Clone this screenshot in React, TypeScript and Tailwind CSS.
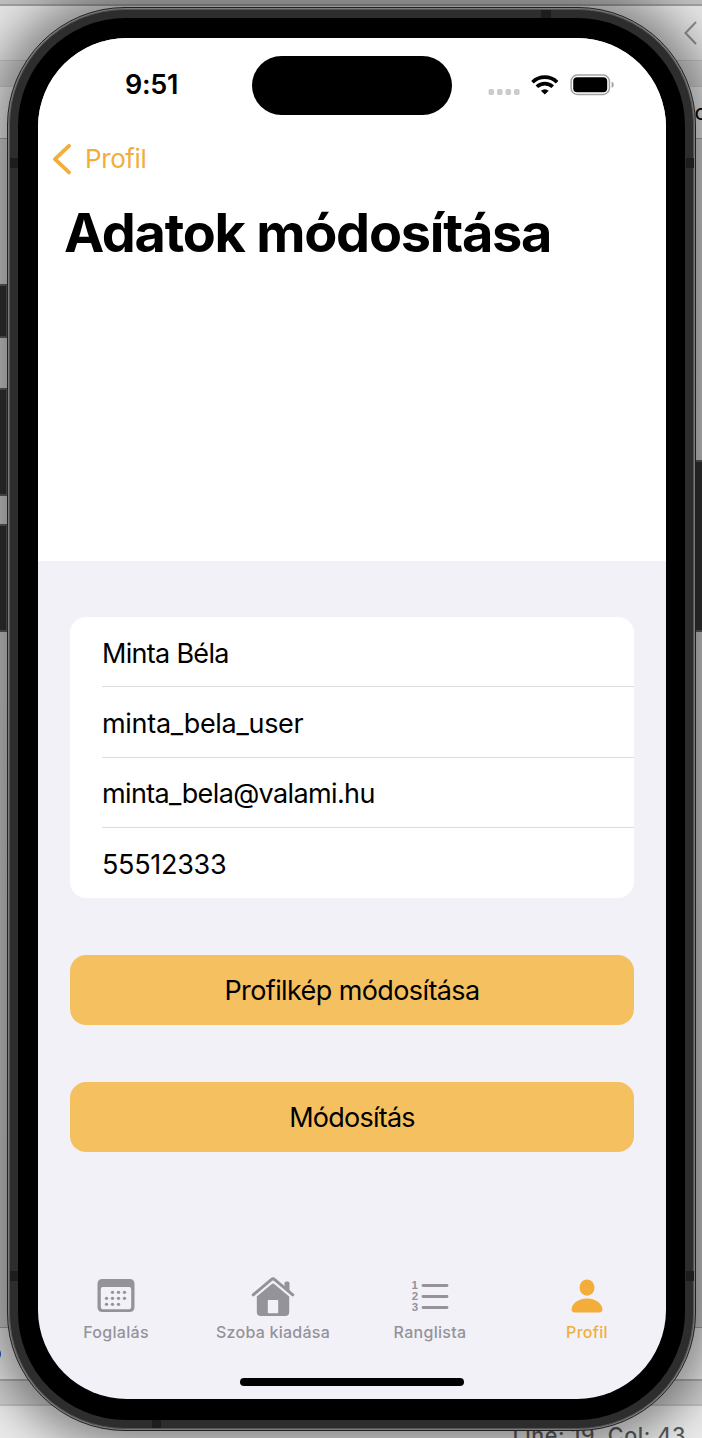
import React from "react";

const rows = [
  { text: "Minta Béla", cls: "tracking-[-0.7px]" },
  { text: "minta_bela_user", cls: "tracking-[-0.3px]" },
  { text: "minta_bela@valami.hu", cls: "tracking-[-0.63px]" },
  { text: "55512333", cls: "tracking-[-0.3px]" },
];

function Backdrop() {
  return (
    <div className="absolute inset-0 flex flex-col overflow-hidden bg-[#b0b0b0]">
      <div className="h-[4px] shrink-0 bg-[#c0c0c0]" />
      <div className="flex h-[57px] shrink-0 items-center justify-end border-t-2 border-b border-t-[#a0a0a0] border-b-[#c8c8c8] bg-[#e6e6e6] pr-[5px]">
        <svg width="13" height="24" viewBox="0 0 13 24" fill="none" stroke="#8d8d8d" strokeWidth="2">
          <path d="M12 1 1.500 12 12 23" />
        </svg>
      </div>
      <div className="h-[25px] shrink-0 bg-[#dadada]" />
      <div className="flex h-[53px] shrink-0 items-center justify-end border-t border-b border-t-[#d0d0d0] border-b-[#ababab] bg-[#f2f2f2]">
        <span className="-mr-[5px] text-[22px] text-black">c</span>
      </div>
      <div className="grow bg-gradient-to-b from-[#dadada] via-[#d4d4d4] to-[#d0d0d0]" />
      <div className="flex h-[54px] shrink-0 items-center border-t border-b-2 border-t-[#a5a5a5] border-b-[#adadad] bg-[#ececec]">
        <div className="-ml-[13px] size-[14px] rounded-full bg-[#1b55cc]" />
      </div>
      <div className="h-[23px] shrink-0 bg-[#d2d2d2]" />
      <div className="flex h-[34px] shrink-0 justify-end border-t-2 border-[#c4c4c4] bg-[#ececec] pt-[16px] pr-[16px] text-[21.5px] leading-[26px] font-medium tracking-[0.6px] whitespace-pre text-[#5b5b5b]">
        Line: 19  Col: 43
      </div>
    </div>
  );
}

function Hardware() {
  return (
    <>
      <div className="absolute top-[284px] left-[-8px] h-[54px] w-[16px] border-2 border-[#606060] bg-[#343434]" />
      <div className="absolute top-[388px] left-[-8px] h-[108px] w-[16px] border-2 border-[#606060] bg-[#343434]" />
      <div className="absolute top-[524px] left-[-8px] h-[108px] w-[16px] border-2 border-[#606060] bg-[#343434]" />
      <div className="absolute top-[460px] right-[-8px] h-[172px] w-[16px] border-2 border-[#606060] bg-[#343434]" />
    </>
  );
}

function AntennaBands() {
  return (
    <>
      <div className="absolute top-[158px] left-[10px] h-[10px] w-[8px] bg-[#1d1d1d]" />
      <div className="absolute top-[158px] right-[8px] h-[10px] w-[8px] bg-[#1d1d1d]" />
      <div className="absolute top-[1271px] left-[10px] h-[10px] w-[8px] bg-[#1d1d1d]" />
      <div className="absolute top-[1271px] right-[8px] h-[10px] w-[8px] bg-[#1d1d1d]" />
      <div className="absolute top-[10px] left-[541px] h-[8px] w-[10px] bg-[#1d1d1d]" />
      <div className="absolute top-[1420px] left-[152px] h-[8px] w-[9px] bg-[#1d1d1d]" />
    </>
  );
}

function StatusBar() {
  return (
    <div className="flex h-[94px] items-center">
      <div className="w-[214px] pt-px pl-[87px] text-[27px] font-semibold tracking-[-0.3px]">9:51</div>
      <div className="h-[59px] w-[200px] rounded-full bg-black" />
      <div className="flex grow items-center pl-[36px]">
        <svg width="128" height="24" viewBox="0 0 128 24">
          <g fill="#cbcbcb">
            <rect x="0.500" y="16" width="5.600" height="6" rx="1.800" />
            <rect x="9" y="16" width="5.600" height="6" rx="1.800" />
            <rect x="17.500" y="16" width="5.600" height="6" rx="1.800" />
            <rect x="26" y="16" width="5.600" height="6" rx="1.800" />
          </g>
          <g fill="none" stroke="#000" strokeWidth="3.700">
            <path d="M44.500 9.200a17.600 17.600 0 0 1 24.600 0" />
            <path d="M48.900 13.800a11.300 11.300 0 0 1 15.800 0" />
          </g>
          <path d="M56.800 21.600 52.900 17.800q3.900-3.300 7.800 0Z" fill="#000" />
          <rect x="83.100" y="2.100" width="38.300" height="19.300" rx="6.200" fill="none" stroke="#a3a3a3" strokeWidth="1.500" />
          <rect x="85.200" y="4.300" width="34" height="15" rx="4" fill="#000" />
          <path d="M123.600 8.600q2.200 1 2.200 3.200t-2.200 3.200Z" fill="#a3a3a3" />
        </svg>
      </div>
    </div>
  );
}

function CalendarIcon() {
  const dots = [
    [15.500, 14], [21.500, 14], [27.500, 14],
    [9.500, 20], [15.500, 20], [21.500, 20], [27.500, 20],
    [9.500, 26], [15.500, 26], [21.500, 26],
  ];
  return (
    <svg width="38" height="36" viewBox="0 0 38 36">
      <path fill="#949399" fillRule="evenodd" d="M5.500 1h27q5 0 5 5v23q0 5-5 5h-27q-5 0-5-5V6q0-5 5-5ZM6 9q-2.200 0-2.200 2.200V29q0 2.300 2.200 2.300h26q2.200 0 2.200-2.300V11.200Q34.200 9 32 9Z" />
      {dots.map(([x, y]) => (
        <circle key={x + "-" + y} cx={x} cy={y + 0.3} r="1.650" fill="#949399" />
      ))}
    </svg>
  );
}

function HouseIcon() {
  return (
    <svg width="44" height="40" viewBox="0 0 44 40">
      <path d="M2.200 18.800 20.300 3.600q1.700-1.400 3.400 0L41.800 18.800" fill="none" stroke="#949399" strokeWidth="3" strokeLinecap="round" strokeLinejoin="round" />
      <path d="M33.500 11V7.200q0-1.700 1.700-1.700h1.600q1.700 0 1.700 1.700v8.200Z" fill="#949399" />
      <path fill="#949399" fillRule="evenodd" d="M5.800 20.500 20.800 8q1.200-1 2.400 0l15 12.500V36q0 4-4 4H9.800q-4 0-4-4ZM17.500 24q-.7 0-.7.7V36.500q0 .7.7.7h9q.7 0 .7-.7V24.700q0-.7-.7-.7Z" />
    </svg>
  );
}

function NumberListIcon() {
  return (
    <svg width="38" height="34" viewBox="0 0 38 34">
      <g fill="#949399" fontFamily="Liberation Sans, sans-serif" fontSize="11.500" fontWeight="700" textAnchor="middle">
        <text x="3.800" y="10.400">1</text>
        <text x="4" y="21.300">2</text>
        <text x="4" y="32.300">3</text>
      </g>
      <path d="M12 6.500h24M12 17.500h24M12 28.500h24" stroke="#949399" strokeWidth="2.900" strokeLinecap="round" />
    </svg>
  );
}

function PersonIcon() {
  return (
    <svg width="32" height="34" viewBox="0 0 32 34" fill="#f2ad3b">
      <ellipse cx="16" cy="8.600" rx="7.500" ry="8.100" />
      <path d="M4 33.500Q.6 33.500.6 30.200C.6 25.500 6.500 19.500 16 19.500s15.400 6 15.400 10.700q0 3.300-3.400 3.300Z" />
    </svg>
  );
}

function Tab({ icon, label, cls }: { icon: React.ReactNode; label: string; cls: string }) {
  return (
    <div className="flex flex-col items-center pr-px">
      <div className="flex h-[43px] items-center">{icon}</div>
      <span className={"mt-[5px] text-[16px] leading-[20px] font-medium whitespace-nowrap " + cls}>{label}</span>
    </div>
  );
}

export default function App() {
  return (
    <div className="relative h-[1438px] w-[702px] overflow-hidden font-[Inter,sans-serif] text-black">
      <Backdrop />
      <Hardware />
      <div className="relative h-[1438px] pt-[7px] pl-[7px]">
        <div className="h-[1424px] w-[689px] rounded-[118px] border border-[#222] bg-[#7a7a7a] p-px shadow-[0_0_50px_16px_rgba(0,0,0,0.46)]">
          <div className="h-full rounded-[116px] border border-[#555] bg-[#2d2d2d] p-[8px]">
            <div className="h-full rounded-[108px] bg-black pt-[20px] pl-[20px]">
              <div className="flex h-[1361px] w-[628px] flex-col overflow-hidden rounded-[89px] bg-[#f2f1f7]">
                <header className="h-[523px] shrink-0 bg-white">
                  <StatusBar />
                  <div className="flex h-[54px] items-center pl-[14px] text-[#f2ad3b]">
                    <svg width="20" height="32" viewBox="0 0 20 32" fill="none" stroke="currentColor" strokeWidth="3.800" strokeLinecap="round" strokeLinejoin="round">
                      <path d="M17 2.800 3 16.200 17 29.400" />
                    </svg>
                    <span className="-mt-[2px] ml-[13px] text-[26px] tracking-[-0.4px]">Profil</span>
                  </div>
                  <h1 className="mt-[15px] pl-[26px] text-[54px] leading-[64px] font-bold tracking-[-1.25px] whitespace-nowrap">Adatok módosítása</h1>
                </header>
                <main className="flex grow flex-col px-[32px] pt-[56px]">
                  <div className="rounded-[16px] bg-white pl-[32px]">
                    {rows.map((r, i) => (
                      <div key={r.text} className={"flex h-[70.25px] items-center text-[27px] " + (i < 3 ? "border-b border-[#dcdcde] " : "") + r.cls}>
                        <span className="pt-[5px]">{r.text}</span>
                      </div>
                    ))}
                  </div>
                  <button className="mt-[57px] h-[70px] rounded-[16px] bg-[#f5c160] pt-[3px] text-[27px] tracking-[-0.6px]">Profilkép módosítása</button>
                  <button className="mt-[57px] h-[70px] rounded-[16px] bg-[#f5c160] pt-[3px] text-[27px] tracking-[-0.75px]">Módosítás</button>
                </main>
                <nav className="grid h-[104px] shrink-0 grid-cols-4 text-[#949399]">
                  <Tab icon={<CalendarIcon />} label="Foglalás" cls="tracking-[0.3px]" />
                  <Tab icon={<HouseIcon />} label="Szoba kiadása" cls="tracking-[0.25px]" />
                  <Tab icon={<NumberListIcon />} label="Ranglista" cls="tracking-[0.3px]" />
                  <Tab icon={<PersonIcon />} label="Profil" cls="tracking-[0.3px] text-[#f2ad3b]" />
                </nav>
                <div className="flex h-[21px] shrink-0 justify-center">
                  <div className="h-[8px] w-[224px] rounded-full bg-black" />
                </div>
              </div>
            </div>
          </div>
        </div>
      </div>
      <AntennaBands />
    </div>
  );
}
